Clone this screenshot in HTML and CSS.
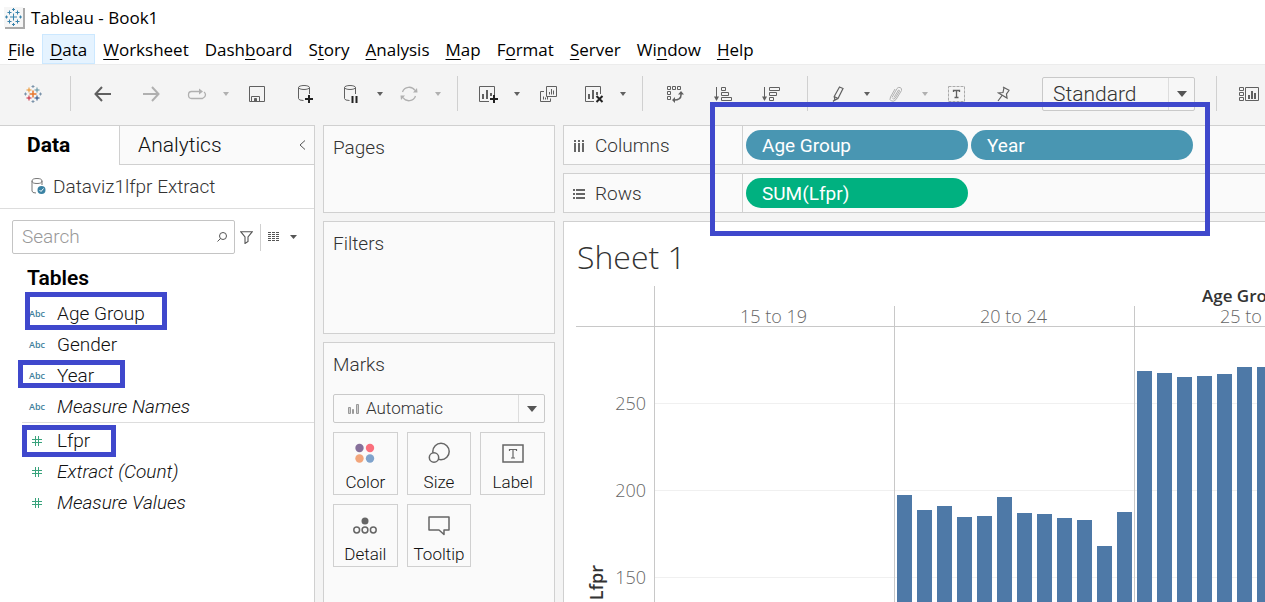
FILE: index.html
```html
<!DOCTYPE html>
<html lang="en">
<head>
<meta charset="utf-8">
<title>Tableau - Book1</title>
<link rel="stylesheet" href="styles.css">
</head>
<body>
<svg class="defs" aria-hidden="true">
  <symbol id="caret" viewBox="0 0 6 4"><path d="M0 0h6L3 4z" fill="currentColor"/></symbol>
  <symbol id="caret-lg" viewBox="0 0 10 6"><path d="M0 0h10L5 6z" fill="currentColor"/></symbol>
  <symbol id="hash" viewBox="0 0 10 10"><path d="M3.5 0v10M6.5 0v10M0 3.5h10M0 6.5h10" stroke="currentColor" fill="none"/></symbol>
</svg>

<header class="titlebar">
  <svg class="app-icon" width="21" height="22" viewBox="0 0 21 22">
    <rect x="1" y="1" width="20" height="21" fill="#aaa"/><rect width="19" height="20" fill="#f6f6f6"/>
    <path d="M9.500 6.500v7M6 10h7M5.500 3.500v4M3.500 5.500h4M13.500 3.500v4M11.500 5.500h4M5.500 12.500v4M3.500 14.500h4M13.500 12.500v4M11.500 14.500h4M9.500 1v3M8 2.500h3M9.500 16v3M8 17.500h3M2.500 8.500v3M1 10h3M16.500 8.500v3M15 10h3" stroke="#3983ac" fill="none"/>
  </svg>
  <span>Tableau - Book1</span>
</header>

<nav class="menubar">
  <button><u>F</u>ile</button>
  <button class="active"><u>D</u>ata</button>
  <button><u>W</u>orksheet</button>
  <button>Dash<u>b</u>oard</button>
  <button>S<u>t</u>ory</button>
  <button><u>A</u>nalysis</button>
  <button><u>M</u>ap</button>
  <button>F<u>o</u>rmat</button>
  <button><u>S</u>erver</button>
  <button>Wi<u>n</u>dow</button>
  <button><u>H</u>elp</button>
</nav>

<div class="toolbar">
  <button class="tool home" aria-label="Start page"><svg width="18" height="18" viewBox="0 0 18 18" fill="none">
    <path d="M9 5.500v7M5.500 9h7" stroke="#e8762c" stroke-width="1.500"/>
    <path d="M5 2.500v5M2.500 5h5" stroke="#eb9129"/><path d="M13 2.500v5M10.500 5h5" stroke="#5c8f9f"/>
    <path d="M5 10.500v5M2.500 13h5" stroke="#c72037"/><path d="M13 10.500v5M10.500 13h5" stroke="#1f447e"/>
    <path d="M9 0v3M7.500 1.500h3M9 15v3M7.500 16.500h3M1.500 7.500v3M0 9h3M16.500 7.500v3M15 9h3" stroke="#7b93aa"/></svg></button>
  <span class="sep"></span>
  <button class="tool" aria-label="Undo"><svg width="18" height="16" viewBox="0 0 18 16"><path d="M17 8H2M8 1L1.500 8 8 15" stroke="currentColor" stroke-width="2" fill="none"/></svg></button>
  <button class="tool off" aria-label="Redo"><svg width="18" height="16" viewBox="0 0 18 16"><path d="M1 8h15M10 1l6.500 7L10 15" stroke="currentColor" stroke-width="2" fill="none"/></svg></button>
  <span class="split off">
    <button class="tool" aria-label="Replay"><svg width="20" height="12" viewBox="0 0 20 12"><path d="M15 10.500H4.500Q1.500 10.500 1.500 7T4.500 3.500H14M17 4Q18.500 5 18.500 7T15.500 10.500H4" stroke="currentColor" fill="none" stroke-width="1.300"/><path d="M12 .5l4 3-4 3z" fill="currentColor"/></svg></button>
    <button class="more" aria-label="Replay options"><svg width="6" height="4"><use href="#caret"/></svg></button>
  </span>
  <button class="tool" aria-label="Save"><svg width="16" height="16" viewBox="0 0 16 16" fill="none" stroke="currentColor"><path d="M.5.500h15v15H.5zM2.500 15.500v-5h8v5M5.500 15.500v-3h2v3"/><path d="M6 12.500h1v3H6z" fill="currentColor"/></svg></button>
  <button class="tool" aria-label="New data source"><svg width="16" height="18" viewBox="0 0 16 18" fill="none" stroke="currentColor"><ellipse cx="7" cy="2.500" rx="5.500" ry="2"/><path d="M1.500 2.500v11q0 2 5 2M12.500 2.500V9"/><path d="M12 10v8M8 14h8" stroke="#222" stroke-width="2"/></svg></button>
  <span class="split">
    <button class="tool" aria-label="Pause auto updates"><svg width="16" height="18" viewBox="0 0 16 18" fill="none" stroke="currentColor"><ellipse cx="7" cy="2.500" rx="5.500" ry="2"/><path d="M1.500 2.500v11q0 2 5 2M12.500 2.500V9"/><path d="M9.500 11v7M13.500 11v7" stroke="#222" stroke-width="2"/></svg></button>
    <button class="more" aria-label="Pause options"><svg width="6" height="4"><use href="#caret"/></svg></button>
  </span>
  <span class="split off">
    <button class="tool" aria-label="Run update"><svg width="18" height="16" viewBox="0 0 18 16" fill="none" stroke="currentColor" stroke-width="1.300"><path d="M2.500 6A7 7 0 0 1 15 4.500M15.500 10A7 7 0 0 1 3 11.500"/><path d="M13 6.500h4.500L17 2zM5 9.500H.5L1 14z" fill="currentColor" stroke="none"/></svg></button>
    <button class="more" aria-label="Update options"><svg width="6" height="4"><use href="#caret"/></svg></button>
  </span>
  <span class="sep"></span>
  <span class="split">
    <button class="tool" aria-label="New worksheet"><svg width="20" height="18" viewBox="0 0 20 18" fill="none" stroke="currentColor"><path d="M11 16.500H1.500v-15h15V10"/><path d="M5 9v5M9 5v9M13 8v3" stroke-width="2"/><path d="M16 10v8M12 14h8" stroke="#222" stroke-width="2"/></svg></button>
    <button class="more" aria-label="New sheet options"><svg width="6" height="4"><use href="#caret"/></svg></button>
  </span>
  <button class="tool" aria-label="Duplicate"><svg width="18" height="18" viewBox="0 0 18 18" fill="none" stroke="currentColor"><path d="M7.500 1.500h10v10h-10zM5 6.500H1.500v10h10V13.500"/><path d="M10.500 7v2.500M12.500 4v5.500M14.500 5.500v4M4.500 11.500v3M6.500 12.500v2M8.500 11.500v3"/></svg></button>
  <span class="split">
    <button class="tool" aria-label="Clear sheet"><svg width="20" height="18" viewBox="0 0 20 18" fill="none" stroke="currentColor"><path d="M10 16.500H1.500v-15h15V9"/><path d="M5 9v5M9 5v9M13 7v3" stroke-width="2"/><path d="M12.500 11l6 6M18.500 11l-6 6" stroke="#222" stroke-width="2"/></svg></button>
    <button class="more" aria-label="Clear options"><svg width="6" height="4"><use href="#caret"/></svg></button>
  </span>
  <span class="sep"></span>
  <button class="tool" aria-label="Swap rows and columns"><svg width="18" height="18" viewBox="0 0 18 18" fill="none" stroke="currentColor"><path d="M1.500 1.500h3v3h-3zM6.500 1.500h3v3h-3zM11.500 1.500h3v3h-3zM1.500 6.500h3v3h-3zM1.500 11.500h3v3h-3z"/><path d="M15 8v2q0 5-7 5" stroke-width="1.500"/><path d="M12 9.500l3-3.500 3 3.500zM9 12l-3 3 3 3z" fill="currentColor" stroke="none"/></svg></button>
  <button class="tool" aria-label="Sort ascending"><svg width="18" height="16" viewBox="0 0 18 16" fill="none" stroke="currentColor"><path d="M2.500 1v10"/><path d="M0 10.500h5L2.500 15z" fill="currentColor" stroke="none"/><path d="M7.500 1.500h4v3h-4zM7.500 6.500h7v3h-7zM7.500 11.500h10v3h-10z"/></svg></button>
  <button class="tool" aria-label="Sort descending"><svg width="18" height="16" viewBox="0 0 18 16" fill="none" stroke="currentColor"><path d="M2.500 1v10"/><path d="M0 10.500h5L2.500 15z" fill="currentColor" stroke="none"/><path d="M7.500 1.500h10v3h-10zM7.500 6.500h7v3h-7zM7.500 11.500h4v3h-4z"/></svg></button>
  <span class="sep"></span>
  <span class="split">
    <button class="tool" aria-label="Highlight"><svg width="12" height="16" viewBox="0 0 12 16" fill="none" stroke="currentColor" stroke-width="1.200"><path d="M7.500 1l3.500 1.500-5 10L3 14l-.8-3.500zM2.200 10.500L6 12.500M1 15.500l2-2"/></svg></button>
    <button class="more" aria-label="Highlight options"><svg width="6" height="4"><use href="#caret"/></svg></button>
  </span>
  <span class="split off">
    <button class="tool" aria-label="Group members"><svg width="14" height="16" viewBox="0 0 14 16" fill="none" stroke="currentColor"><path d="M3 11.500l5-9q1-1.500 3-1t1.500 3L7 13.500q-2 2.500-4.500 1.500T1.500 11L6 3M5 11.500L9.500 4q1 0 1 1L6 12.500q-1.500 1-2.500 0"/></svg></button>
    <button class="more" aria-label="Group options"><svg width="6" height="4"><use href="#caret"/></svg></button>
  </span>
  <button class="tool" aria-label="Show mark labels"><svg width="17" height="16" viewBox="0 0 17 16" fill="none"><path d="M.5.500h16v15H.5z" stroke="#aaa" stroke-dasharray="3 1"/><path d="M5.500 6V4.500h6V6M8.500 4.500v7M6.500 11.500h4" stroke="currentColor" stroke-width="1.300"/></svg></button>
  <button class="tool" aria-label="Fix axes"><svg width="14" height="16" viewBox="0 0 14 16" fill="none" stroke="currentColor" stroke-width="1.200"><path d="M6 1l6.500 3.500M7 1.500L6 6.500l-4.500.5 8.500 5-.5-4L12 4.500M5 9.500L1 15"/></svg></button>
  <span class="picker fit">
    <select aria-label="Fit"><option>Standard</option></select>
    <span class="picker-arrow"><svg width="10" height="6"><use href="#caret-lg"/></svg></span>
  </span>
  <span class="sep"></span>
  <button class="tool" aria-label="Show Me"><svg width="20" height="16" viewBox="0 0 20 16" fill="none" stroke="currentColor"><path d="M.5 1.500h4v3h-4zM.5 6.500h4v3h-4zM.5 11.500h4v3h-4zM6.500 1.500h13v13h-13z"/><path d="M10 9v4M13 5v8M16 7v6" stroke-width="2"/></svg></button>
</div>

<main class="workspace">
  <aside class="data-pane">
    <div class="tabs">
      <button class="tab selected">Data</button>
      <button class="tab">Analytics</button>
      <button class="collapse" aria-label="Collapse"><svg width="7" height="10" viewBox="0 0 7 10"><path d="M6 .5L1 5l5 4.500" fill="none" stroke="#555"/></svg></button>
    </div>
    <div class="source">
      <svg width="15" height="17" viewBox="0 0 15 17" fill="none" stroke="#777"><ellipse cx="6" cy="3" rx="5" ry="2.500"/><path d="M1 3v10q0 2 4 2M11 3v4"/><circle cx="10.500" cy="12" r="4" fill="#3a82a3" stroke="none"/><path d="M8.500 12l1.500 1.500 2.500-3" stroke="#fff"/></svg>
      <span>Dataviz1lfpr Extract</span>
    </div>
    <div class="search-row">
      <label class="search"><input type="text" placeholder="Search" aria-label="Search fields">
        <svg width="10" height="10" viewBox="0 0 10 10" fill="none" stroke="#555"><circle cx="6" cy="4" r="3.500"/><path d="M3.500 6.500L.5 9.500"/></svg></label>
      <button class="mini" aria-label="Filter"><svg width="13" height="13" viewBox="0 0 13 13"><path d="M.7.700h11.600L8 6v4.500L5 12.500V6z" fill="none" stroke="#555" stroke-width="1.100"/></svg></button>
      <button class="view-as" aria-label="View as"><svg width="12" height="10" viewBox="0 0 12 10"><path d="M0 .5h12M0 2.500h12M0 4.500h12M0 6.500h12M0 8.500h12" stroke="#555" stroke-dasharray="3 1 3 1 3 1"/></svg><svg width="7" height="4" viewBox="0 0 7 4"><path d="M0 0h7L3.500 4z" fill="#555"/></svg></button>
    </div>
    <h2 class="tables-title">Tables</h2>
    <ul class="fields">
      <li class="dim">Age Group<span class="mark mark-age"></span></li>
      <li class="dim">Gender</li>
      <li class="dim">Year<span class="mark mark-year"></span></li>
      <li class="dim generated">Measure Names</li>
    </ul>
    <ul class="fields measures">
      <li><svg width="10" height="10"><use href="#hash"/></svg>Lfpr<span class="mark mark-lfpr"></span></li>
      <li class="generated"><svg width="10" height="10"><use href="#hash"/></svg>Extract (Count)</li>
      <li class="generated"><svg width="10" height="10"><use href="#hash"/></svg>Measure Values</li>
    </ul>
  </aside>

  <section class="cards">
    <div class="card pages"><h3>Pages</h3></div>
    <div class="card filters"><h3>Filters</h3></div>
    <div class="card marks">
      <h3>Marks</h3>
      <div class="picker mark-type">
        <svg class="picker-icon" width="11" height="10" viewBox="0 0 11 10" fill="#ccc" stroke="#999"><path d="M.5 3.500h2v6h-2zM4.500 5.500h1v4h-1zM8.500.500h2v9h-2z"/></svg>
        <select aria-label="Mark type"><option>Automatic</option></select>
        <span class="picker-arrow"><svg width="10" height="6"><use href="#caret-lg"/></svg></span>
      </div>
      <div class="mark-buttons">
        <button><svg width="24" height="22" viewBox="0 0 24 22"><circle cx="6.500" cy="6" r="4.200" fill="#86709a"/><circle cx="17" cy="6" r="4.200" fill="#fa6f7c"/><circle cx="6.500" cy="16.500" r="4.200" fill="#f2a57b"/><circle cx="17" cy="16.500" r="4.200" fill="#7fa3cc"/></svg>Color</button>
        <button><svg width="24" height="22" viewBox="0 0 24 22" fill="#fafafa" stroke="#666" stroke-width="1.500"><circle cx="14" cy="9.500" r="8.200"/><circle cx="7" cy="15.500" r="4.700"/></svg>Size</button>
        <button><svg width="24" height="22" viewBox="0 0 24 22" fill="none" stroke="#666" stroke-width="1.500"><path d="M2 3h20v17H2z"/><path d="M8.500 9V7.500h7V9M12 7.500V16M10 16h4" stroke-width="1.200"/></svg>Label</button>
        <button><svg width="24" height="22" viewBox="0 0 24 22" fill="none" stroke="#666" stroke-width="1.500"><circle cx="12" cy="7" r="3.500" fill="#666" stroke="none"/><circle cx="3.700" cy="16" r="2.900"/><circle cx="12" cy="16" r="2.900"/><circle cx="20.300" cy="16" r="2.900"/></svg>Detail</button>
        <button><svg width="24" height="22" viewBox="0 0 24 22" fill="none" stroke="#666" stroke-width="1.500"><path d="M2 3h20v13h-5v4.500L12 16H2z" stroke-linejoin="round"/></svg>Tooltip</button>
      </div>
    </div>
  </section>

  <section class="canvas">
    <div class="shelves">
      <div class="shelf">
        <div class="shelf-label"><svg width="12" height="12" viewBox="0 0 12 12"><path d="M2 0v2M6 0v2M10 0v2M2 3v9M6 3v9M10 3v9" stroke="#666" stroke-width="2"/></svg>Columns</div>
        <button class="pill">Age Group</button><button class="pill">Year</button>
      </div>
      <div class="shelf">
        <div class="shelf-label"><svg width="12" height="12" viewBox="0 0 12 12"><path d="M0 2h2M0 6h2M0 10h2M3 2h9M3 6h9M3 10h9" stroke="#666" stroke-width="2"/></svg>Rows</div>
        <button class="pill green">SUM(Lfpr)</button>
      </div>
      <span class="mark mark-shelves"></span>
    </div>
    <div class="sheet">
      <h1>Sheet 1</h1>
      <div class="chart">
        <div class="corner"></div>
        <div class="heads">
          <div class="heads-title">Age Group</div>
          <div class="heads-row"><span>15 to 19</span><span>20 to 24</span><span>25 to 29</span></div>
        </div>
        <div class="axis">
          <span class="axis-title">Lfpr</span>
          <div class="ticks"><span>250</span><span>200</span><span>150</span></div>
        </div>
        <div class="plot">
          <div class="pane"></div>
          <div class="pane">
            <i style="height:343px"></i><i style="height:328px"></i><i style="height:332px"></i><i style="height:321px"></i><i style="height:322px"></i><i style="height:341px"></i><i style="height:325px"></i><i style="height:324px"></i><i style="height:320px"></i><i style="height:318px"></i><i style="height:292px"></i><i style="height:326px"></i>
          </div>
          <div class="pane">
            <i style="height:467px"></i><i style="height:465px"></i><i style="height:461px"></i><i style="height:462px"></i><i style="height:464px"></i><i style="height:471px"></i><i style="height:471px"></i>
          </div>
        </div>
      </div>
    </div>
  </section>
</main>
</body>
</html>
```
FILE: styles.css
```css
* { box-sizing: border-box; }
body {
  margin: 0;
  height: 100vh;
  display: flex;
  flex-direction: column;
  overflow: hidden;
  background: #fff;
  color: #333;
  font: 300 19px/24px Roboto, "Liberation Sans", sans-serif;
}
button, select, input { font: inherit; color: inherit; }
button { border: 0; background: none; padding: 0; margin: 0; }
h1, h2, h3, ul { margin: 0; padding: 0; }
ul { list-style: none; }
svg { display: block; flex: none; }
.defs { position: absolute; width: 0; height: 0; }

.titlebar {
  display: flex;
  align-items: center;
  gap: 6px;
  height: 34px;
  padding: 1px 0 0 4px;
  flex: none;
  color: #000;
  font: 400 17px/24px "Open Sans", "Noto Sans", sans-serif;
}
.menubar {
  display: flex;
  height: 30px;
  flex: none;
  color: #000;
  font: 400 17px/28px "Open Sans", "Noto Sans", sans-serif;
}
.menubar button { padding: 2px 7px 0; border: 1px solid transparent; line-height: 26px; }
.menubar button:first-child { padding-right: 6px; }
.menubar .active { background: #e5f3ff; border-color: #cce8ff; }
.menubar u { text-underline-offset: 3px; text-decoration-thickness: 1px; }

.toolbar {
  display: flex;
  align-items: center;
  height: 61px;
  flex: none;
  padding: 0 0 3px 8px;
  background: #f4f4f4;
  border-top: 1px solid #ececec;
  color: #606060;
  overflow: hidden;
}
.tool { width: 48px; height: 34px; flex: none; display: grid; place-items: center; }
.home { width: 50px; }
.split { display: flex; flex: none; }
.split .tool { width: 44px; }
.more { width: 14px; display: grid; place-items: center; }
.off { color: #b0b0b0; }
.sep { width: 1px; height: 35px; flex: none; margin: 0 8px 0 12px; background: #d0d0d0; }

.picker {
  display: flex;
  align-items: center;
  position: relative;
  border: 1px solid #c9c9c9;
  border-radius: 2px;
  background: #fafafa;
}
.picker select {
  appearance: none;
  width: 100%;
  height: 100%;
  border: 0;
  background: none;
  color: #333;
}
.picker-arrow {
  position: absolute;
  right: 0;
  height: 100%;
  width: 26px;
  display: grid;
  place-items: center;
  border-left: 1px solid #ddd;
  color: #555;
  pointer-events: none;
}
.fit { width: 153px; height: 34px; flex: none; margin: 0 9px 0 14px; background: #f7f7f7; }
.fit select { padding: 1px 10px 0; font-size: 21px; }

.workspace {
  flex: 1;
  min-height: 0;
  display: grid;
  grid-template-columns: 315px 232px minmax(0, 1fr);
  gap: 8px;
  background: #f4f4f4;
}
.data-pane { background: #fff; border: 1px solid #d0d0d0; border-width: 1px 1px 0 0; color: #111; }
.tabs { display: flex; height: 39px; font-size: 21px; }
.tab { padding-left: 18px; text-align: left; flex: 1; background: #fafafa; border: 1px solid #d0d0d0; border-width: 0 0 1px 1px; }
.tab.selected { flex: none; width: 119px; padding: 0 0 1px 27px; background: #fff; border: 0; color: #000; font-weight: 700; }
.collapse { width: 20px; padding-left: 5px; background: #fafafa; border-bottom: 1px solid #d0d0d0; }
.source {
  display: flex;
  align-items: center;
  gap: 7px;
  height: 44px;
  padding-left: 31px;
  border-bottom: 1px solid #ddd;
  color: #333;
}
.search-row { display: flex; align-items: center; padding: 11px 0 0 12px; }
.search {
  display: flex;
  align-items: center;
  width: 223px;
  height: 34px;
  padding: 0 7px 0 9px;
  border: 1px solid #c4c4c4;
  border-radius: 2px;
}
.search input { flex: 1; min-width: 0; border: 0; padding: 0; background: none; outline: 0; }
.search input::placeholder { color: #999; opacity: 1; }
.mini { padding: 0 7px 0 5px; }
.view-as { display: flex; align-items: center; gap: 10px; height: 27px; padding-left: 7px; border-left: 1px solid #d0d0d0; }
.tables-title { margin: 12px 0 8px 27px; color: #000; font: 600 21px/24px Roboto, sans-serif; }
.fields { margin-left: 22px; }
.fields li { position: relative; display: flex; align-items: center; height: 31px; padding-left: 35px; }
.fields .dim { padding-left: 0; }
.dim::before { content: "Abc"; width: 28px; margin-left: 7px; font: 600 9px/12px "Open Sans", sans-serif; color: #3f7f9c; }
.generated { font-style: italic; }
.measures { border-top: 1px solid #ddd; padding-top: 2px; }
.measures li { padding-left: 10px; gap: 15px; }
.measures svg { color: #39a37c; }

.mark { position: absolute; border: 5px solid #3f48cc; pointer-events: none; }
.mark-age { left: 3px; top: -6px; width: 142px; height: 38px; }
.mark-year { left: -4px; top: 0; width: 107px; height: 28px; }
.mark-lfpr { left: 0; top: 0; width: 94px; height: 32px; }
.mark-shelves { left: 147px; top: -23px; width: 500px; height: 134px; }

.cards { display: flex; flex-direction: column; gap: 8px; min-height: 0; }
.card { border: 1px solid #d0d0d0; background: #fafafa; padding: 10px 9px; }
.card h3 { font: inherit; }
.pages { height: 88px; flex: none; }
.filters { height: 113px; flex: none; }
.marks { flex: 1; border-bottom: 0; }
.mark-type { height: 29px; margin: 17px 0 9px; font-size: 17px; }
.mark-type select { padding: 0 7px 1px; }
.picker-icon { margin-left: 14px; }
.mark-buttons { display: grid; grid-template-columns: repeat(3, 1fr); gap: 9px; }
.mark-buttons button {
  display: flex;
  flex-direction: column;
  align-items: center;
  gap: 8px;
  height: 63px;
  padding-top: 9px;
  border: 1px solid #d0d0d0;
  color: #111;
  font-size: 17px;
  line-height: 20px;
}

.canvas { display: flex; flex-direction: column; gap: 8px; min-height: 0; }
.shelves { position: relative; display: flex; flex-direction: column; gap: 8px; }
.shelf {
  display: flex;
  align-items: center;
  gap: 3px;
  height: 40px;
  border: 1px solid #d0d0d0;
  border-right: 0;
  background: #fafafa;
}
.shelf-label { display: flex; align-items: center; gap: 10px; width: 179px; height: 100%; padding: 1px 0 0 9px; border-right: 1px solid #d0d0d0; }
.pill { width: 222px; height: 30px; padding: 1px 0 0 16px; border-radius: 15px; background: #4996b2; color: #fff; text-align: left; font-weight: 400; }
.pill.green { background: #00b180; }

.sheet { flex: 1; min-height: 0; display: flex; flex-direction: column; border: 1px solid #d0d0d0; border-width: 1px 0 0 1px; background: #fff; padding-left: 12px; }
.sheet h1 { padding: 15px 0 9px 1px; font: 300 32px/40px "Open Sans", sans-serif; }
.chart {
  flex: 1;
  min-height: 0;
  overflow: hidden;
  display: grid;
  grid-template-columns: 78px minmax(0, 1fr);
  grid-template-rows: 41px 511px;
  color: #666;
  font: 300 18px/20px "Open Sans", sans-serif;
}
.corner { border-bottom: 1px solid #c8c8c8; }
.heads { border: 1px solid #c8c8c8; border-width: 0 0 1px 1px; overflow: hidden; white-space: nowrap; }
.heads-title { height: 20px; padding-left: 547px; color: #333; font-weight: 600; font-size: 17px; }
.heads-row { display: flex; height: 20px; }
.heads-row span { flex: none; width: 240px; padding-right: 2px; text-align: center; border-right: 1px solid #c8c8c8; }
.axis { display: flex; align-items: center; justify-content: space-between; padding-left: 10px; }
.axis-title { writing-mode: vertical-rl; transform: rotate(180deg); color: #333; font-weight: 600; }
.ticks { align-self: start; padding: 33px 8px 0 0; line-height: 87px; }
.ticks span { display: block; }
.plot {
  display: flex;
  overflow: hidden;
  border-left: 1px solid #c8c8c8;
  background: linear-gradient(transparent 86px, #f0f0f0 86px) 0 -10px / 100% 87px;
}
.pane { display: flex; align-items: flex-end; gap: 5px; width: 240px; flex: none; padding-left: 2px; border-right: 1px solid #c8c8c8; }
.pane i { width: 15px; flex: none; background: #4e79a7; }
```
